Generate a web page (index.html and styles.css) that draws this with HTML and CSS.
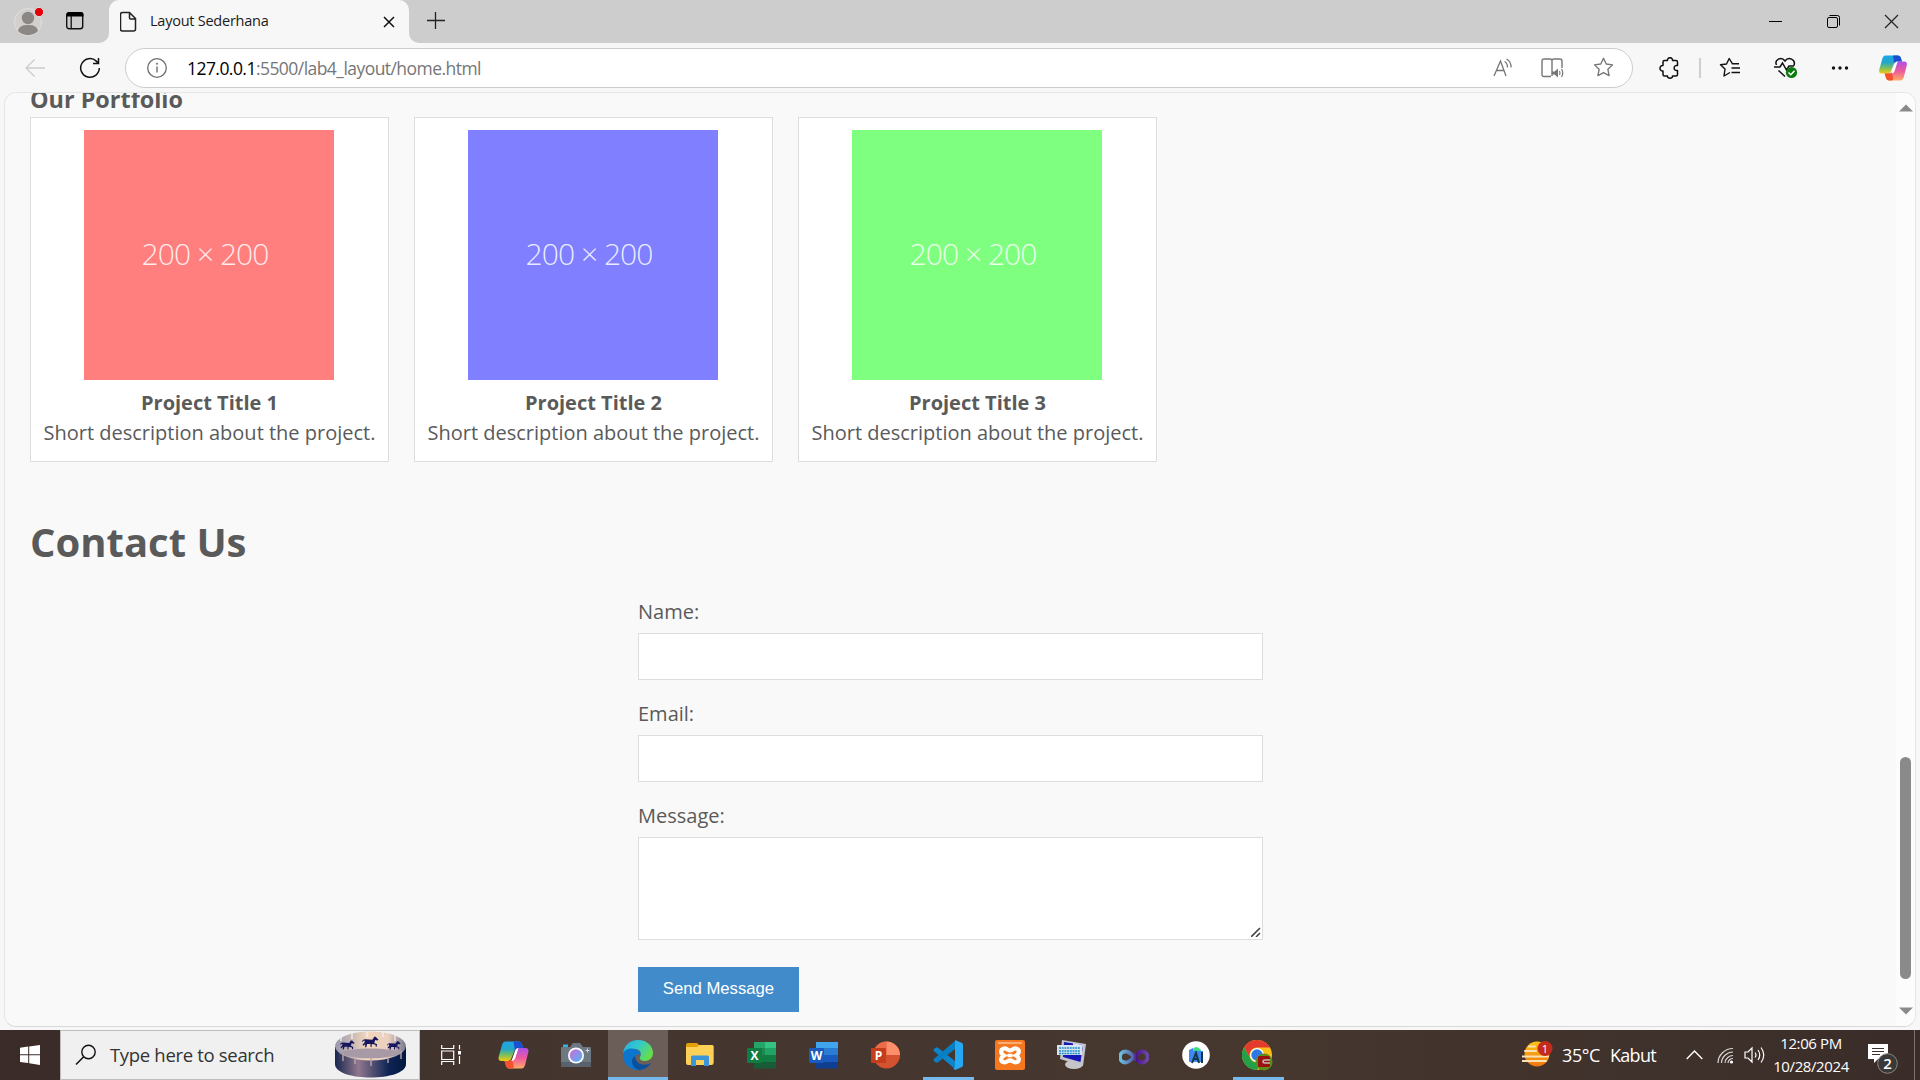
FILE: index.html
```html
<!DOCTYPE html>
<html lang="en">
<head>
<meta charset="utf-8">
<title>Layout Sederhana</title>
<link rel="stylesheet" href="styles.css">
</head>
<body>
<svg width="0" height="0" class="defs">
  <defs>
    <linearGradient id="cpA" x1="0" y1="0" x2="0" y2="1"><stop offset="0" stop-color="#1ba5ea"/><stop offset=".4" stop-color="#25a7c8"/><stop offset=".7" stop-color="#7fbf5a"/><stop offset="1" stop-color="#f6cc10"/></linearGradient>
    <linearGradient id="cpB" x1="0" y1="0" x2="0" y2="1"><stop offset="0" stop-color="#ad50e8"/><stop offset=".5" stop-color="#ee5a9c"/><stop offset="1" stop-color="#ffac68"/></linearGradient>
    <linearGradient id="edgeA" x1="0" y1="0" x2="1" y2=".5"><stop offset="0" stop-color="#2aa9e0"/><stop offset=".5" stop-color="#32c8cf"/><stop offset="1" stop-color="#65de4c"/></linearGradient>
    <linearGradient id="drum" x1="0" y1="0" x2="1" y2="0"><stop offset="0" stop-color="#17264f"/><stop offset=".33" stop-color="#90788e"/><stop offset=".75" stop-color="#102555"/><stop offset="1" stop-color="#01183f"/></linearGradient>
    <linearGradient id="rim" x1="0" y1="0" x2="1" y2="0"><stop offset="0" stop-color="#9a98ad"/><stop offset=".45" stop-color="#f2d6bd"/><stop offset=".75" stop-color="#ead0bf"/><stop offset="1" stop-color="#77798f"/></linearGradient>
    <linearGradient id="sun" x1="0" y1="0" x2="0" y2="1"><stop offset="0" stop-color="#ffc414"/><stop offset="1" stop-color="#f0750f"/></linearGradient>
    <linearGradient id="lens" x1="0" y1="0" x2="1" y2="1"><stop offset="0" stop-color="#d56bd8"/><stop offset="1" stop-color="#48b7f5"/></linearGradient>
    <linearGradient id="inf" x1="0" y1="0" x2="1" y2="0"><stop offset="0" stop-color="#6fc0e0"/><stop offset=".45" stop-color="#5668b0"/><stop offset=".6" stop-color="#4c1589"/><stop offset="1" stop-color="#6f46ab"/></linearGradient>
    <symbol id="copilot" viewBox="0 0 30 28">
      <path d="M7 .5h13c2 0 3 1 3.600 3l1 3.500H20c-3 0-4 2-5 5l-2 5c-.7 2-2 3-4 3H3c-3 0-3.500-2-2.600-5L3.500 4C4.300 1.500 5.500.5 7 .5z" fill="url(#cpA)"/>
      <path d="M15 .5h5c2 0 3 1 3.600 3l1 3.500H20c-1.500 0-3 .6-3.700 2z" fill="#1b4fd0"/>
      <path d="M23 27.500H11c-2 0-3-1-3.600-3L6 20h4c3 0 4-2 5-5l1.700-5c.6-2 2-3 4-3H27c3 0 3.500 2 2.600 5l-3 12c-.8 2.500-2 3.500-3.600 3.500z" fill="url(#cpB)"/>
      <path d="M11 27.500c-2 0-3-1-3.600-3L6 20h4c1.500 0 2.800-.6 3.600-2L15 24c.5 2 0 3.500-2 3.500z" fill="#f4512f"/>
      <path d="M13 20l3.500-10c.7-2 2-3 3.500-3L17 16.500c-.7 2.300-2 3.500-4 3.500z" fill="#fff"/>
    </symbol>
    <symbol id="star" viewBox="0 0 20 20"><path d="M10 1.200l2.600 5.500 6 .8-4.400 4.200 1.100 6L10 14.800l-5.300 2.900 1.100-6L1.400 7.500l6-.8z" fill="none" stroke="currentColor" stroke-width="1.300" stroke-linejoin="round"/></symbol>
    <symbol id="horse" viewBox="0 0 18 12"><path d="M0 6.500Q0 3 3.500 3L11 3.500 13 .5h1.500l3 3-1 1-2.500-.5-1 3 3 1.500-.5 2.500-1-.3-.2-1.700-3.800-1-.5 3.500-1-.3L9 8 5.500 8l-1 3.500H3.200L3.500 8.500 1.500 10 .5 9.200 3 6l-.5-1.500Q1 4.500 0 6.500z" fill="#16175c"/></symbol>
  </defs>
</svg>

<header class="tabstrip">
  <div class="lead">
    <svg width="32" height="32" viewBox="0 0 32 32"><circle cx="16" cy="17" r="13.500" fill="#d2d0ce" stroke="#e2e0de"/><circle cx="16" cy="13" r="6.200" fill="#8b8784"/><path d="M6 26c1-5 5-6 10-6s9 1 10 6c-5 5.500-15 5.500-20 0z" fill="#8b8784"/><circle cx="27" cy="7" r="4.600" fill="#e3000b" stroke="#dedede"/></svg>
    <svg width="20" height="20" viewBox="0 0 20 20"><rect x="1.700" y="1.700" width="16" height="16" rx="2.500" fill="none" stroke="#111" stroke-width="1.400"/><path d="M1.500 5.500V3.500q0-2.500 2.500-2.500h12q2.500 0 2.500 2.500v2z" fill="#000"/><path d="M6.200 5v13" stroke="#111" stroke-width="1.300"/></svg>
  </div>
  <div class="tab">
    <svg width="18" height="22" viewBox="0 0 18 22"><path d="M2.500 1.500h7l6 6V18q0 2-2 2h-11q-2 0-2-2V3.500q0-2 2-2zM9.500 1.500V7q0 1 1 1h5" fill="none" stroke="#222" stroke-width="1.500"/></svg>
    <span class="tab-title">Layout Sederhana</span>
    <svg width="12" height="12" viewBox="0 0 12 12"><path d="M1 1l10 10M11 1L1 11" stroke="#111" stroke-width="1.500"/></svg>
  </div>
  <svg class="plus" width="18" height="18" viewBox="0 0 18 18"><path d="M0 8.500h18M8.500 0v17" stroke="#222" stroke-width="1.300"/></svg>
  <div class="window-buttons">
    <svg width="15" height="15" viewBox="0 0 15 15"><path d="M1 7.500h13" stroke="#000"/></svg>
    <svg width="15" height="15" viewBox="0 0 15 15"><rect x="1.500" y="3.500" width="10" height="10" rx="1.500" fill="none" stroke="#000"/><path d="M3.500 1.500h8q2 0 2 2v8" fill="none" stroke="#000"/></svg>
    <svg width="15" height="15" viewBox="0 0 15 15"><path d="M1 1l13 13M14 1L1 14" stroke="#222" stroke-width="1.200"/></svg>
  </div>
</header>

<nav class="toolbar">
  <svg class="back" width="22" height="20" viewBox="0 0 22 20"><path d="M21 10H2M10.500 1.500L2 10l8.500 8.500" fill="none" stroke="#ccc" stroke-width="1.300"/></svg>
  <svg class="reload" width="22" height="22" viewBox="0 0 22 22"><path d="M20.300 11a9.300 9.300 0 1 1-3-6.900l2 2M19.500 1v5.500H14" fill="none" stroke="#111" stroke-width="1.500"/></svg>
  <div class="address">
    <svg width="22" height="22" viewBox="0 0 22 22"><circle cx="11" cy="11" r="9.300" fill="none" stroke="#6e6e6e" stroke-width="1.300"/><path d="M11 9.500v6" stroke="#6e6e6e" stroke-width="1.400"/><circle cx="11" cy="6.800" r="1" fill="#6e6e6e"/></svg>
    <span class="url"><b>127.0.0.1</b>:5500/lab4_layout/home.html</span>
    <div class="address-actions">
      <svg width="20" height="20" viewBox="0 0 20 20"><path d="M1 18L7.500 3 13 18M3.500 12.500h7.500M11.500 3.500q3 1.500 3 6M13.500 1q5 3 4.500 8.500" fill="none" stroke="#767676" stroke-width="1.300"/></svg>
      <svg width="24" height="20" viewBox="0 0 24 20"><path d="M10 18.500H3q-2 0-2-2V3q0-2 2-2h6q2 0 2 2v15M11 3q0-2 2-2h6q2 0 2 2v7" fill="none" stroke="#767676" stroke-width="1.400"/><path d="M11 13.500h2.500L17 10.500v9l-3.500-3H11z" fill="#767676"/><path d="M18.500 13q1 2 0 4M20.500 11q2.500 4 0 8" fill="none" stroke="#767676" stroke-width="1.200"/></svg>
      <svg width="21" height="21"><use href="#star"/></svg>
    </div>
  </div>
  <svg class="puzzle" width="21" height="22" viewBox="0 0 21 22"><path d="M5.500 3.500H8.500C8-.2 14 -.2 13.500 3.500h3.500q1.500 0 1.500 1.500V8.500C14 7.500 14 14.500 18.500 13.500v4q0 1.500-1.500 1.500h-3.500c.5 3-5.500 3-5 0H5.500Q4 19 4 17.500v-3.500C0 14.500 0 8 4 8.500V5q0-1.500 1.500-1.500z" fill="none" stroke="#111" stroke-width="1.500" stroke-linejoin="round"/></svg>
  <i class="divider"></i>
  <svg class="favs" width="22" height="21" viewBox="0 0 22 21"><path d="M20 6.800h-6.500L10.200 1.500 7.500 7l-6 .8L6 12l-1 7 6-3.500M12.500 11H21M12.500 15.500H21" fill="none" stroke="#111" stroke-width="1.400" stroke-linejoin="round"/></svg>
  <svg class="health" width="24" height="22" viewBox="0 0 24 22"><path d="M2.500 8C0 2.500 7.500-1 11 4c3.500-5 11-1.500 9 4.500M0 10h6l2.500-4 4 7 2.500-4h5M4.500 13.500l6.500 6" fill="none" stroke="#111" stroke-width="1.500"/><circle cx="17.500" cy="15.500" r="5.600" fill="#0d7a10"/><path d="M14.500 15.500l2.300 2.200 3.700-4" fill="none" stroke="#fff" stroke-width="1.500"/></svg>
  <svg class="dots" width="18" height="6" viewBox="0 0 18 6"><g fill="#111"><circle cx="2.500" cy="3" r="1.700"/><circle cx="9" cy="3" r="1.700"/><circle cx="15.500" cy="3" r="1.700"/></g></svg>
  <svg class="cp" width="28" height="26"><use href="#copilot"/></svg>
</nav>

<div class="viewport">
  <main class="page">
    <h3 class="portfolio-heading">Our Portfolio</h3>
    <section class="portfolio">
      <article class="card"><div class="thumb red">200 × 200</div><h4>Project Title 1</h4><p>Short description about the project.</p></article>
      <article class="card"><div class="thumb blue">200 × 200</div><h4>Project Title 2</h4><p>Short description about the project.</p></article>
      <article class="card"><div class="thumb green">200 × 200</div><h4>Project Title 3</h4><p>Short description about the project.</p></article>
    </section>
    <h1>Contact Us</h1>
    <form class="contact">
      <label for="name">Name:</label>
      <input id="name" type="text">
      <label for="email">Email:</label>
      <input id="email" type="email">
      <label for="message">Message:</label>
      <div class="message-box">
        <textarea id="message"></textarea>
        <svg class="grip" width="10" height="10" viewBox="0 0 10 10"><path d="M0 10L9 1M5 10l4-4" stroke="#444" stroke-width="1.600"/></svg>
      </div>
      <button type="button">Send Message</button>
    </form>
  </main>
  <div class="scrollbar">
    <svg width="14" height="8" viewBox="0 0 14 8"><path d="M0 7.500L7 .5l7 7z" fill="#8a8a8a"/></svg>
    <i class="scroll-thumb"></i>
    <svg width="14" height="8" viewBox="0 0 14 8"><path d="M0 .5h14l-7 7z" fill="#8a8a8a"/></svg>
  </div>
</div>

<footer class="taskbar">
  <div class="start"><svg width="20" height="20" viewBox="0 0 20 20"><path d="M0 2.800L8.200 1.600v7.700H0zM9.200 1.400L20 0v9.300H9.200zM0 10.300h8.200V18L0 17zM9.200 10.300H20V20L9.200 18.300z" fill="#fff"/></svg></div>
  <div class="search">
    <svg width="22" height="22" viewBox="0 0 22 22"><circle cx="13.500" cy="8" r="6.700" fill="none" stroke="#111" stroke-width="1.400"/><path d="M8.700 12.800L1 20.500" stroke="#111" stroke-width="1.500"/></svg>
    <span>Type here to search</span>
    <svg class="carousel" width="72" height="48" viewBox="0 0 72 48">
      <path d="M0 16v17c0 18 71 18 71 0V16z" fill="url(#drum)"/>
      <ellipse cx="35.500" cy="15" rx="35.500" ry="14.500" fill="url(#rim)"/>
      <path d="M4 22c10-6 53-6 63 0-12 7-51 7-63 0z" fill="#a799a6"/>
      <use href="#horse" x="5" y="8" width="15" height="12"/><use href="#horse" x="27" y="5" width="17" height="12"/><use href="#horse" x="52" y="9" width="14" height="11"/>
      <path d="M6 5v5M17 2v6M32 1v5M48 1v5M60 4v6" stroke="#f4f0ee" stroke-width="1.300"/>
      <path d="M8 22v8M20 25v8M36 27v8M53 25v7M66 20v8" stroke="#b9a6a9" stroke-width="1.400"/>
    </svg>
  </div>
  <div class="apps">
    <div class="app"><svg width="20" height="20" viewBox="0 0 20 20"><path d="M.7 0v3.500h12V0M.7 20v-3.500h12V20M.7 6h12v8.500H.7zM18.500 0v4.500M18.500 11v8" fill="none" stroke="#fff" stroke-width="1.200"/><path d="M17 6h3v3.500h-3z" fill="#fff"/></svg></div>
    <div class="app"><svg width="31" height="28"><use href="#copilot"/></svg></div>
    <div class="app"><svg width="30" height="26" viewBox="0 0 30 26"><path d="M2 2.500h5V6H2z" fill="#36b0e2"/><path d="M1 5h8l3-4h7l3 4h7q1 0 1 1v18q0 1-1 1H1q-1 0-1-1V6q0-1 1-1z" fill="#6e7883"/><path d="M0 20h30v4q0 1-1 1H1q-1 0-1-1z" fill="#59626c"/><circle cx="15" cy="13.500" r="8" fill="#fff"/><circle cx="15" cy="13.500" r="6.300" fill="url(#lens)"/><path d="M26.500 6.500v4M24.500 8.500h4" stroke="#c8d4de"/></svg></div>
    <div class="app active"><svg width="30" height="30" viewBox="0 0 30 30"><path d="M0 14C1 5 7 0 15 0c9 0 15 6 15 13 0 5-4 8-8 8-4 0-6-2-5-4 2-4 0-8-5-8-5 0-10 1-12 5z" fill="url(#edgeA)"/><path d="M0 15C0 10 5 8.500 9 8.500c5 0 9 3 8.500 7-2-2-6-1-6 3 0 6 8 9 16 5C24 28 20 30 15 30 6 30 0 23 0 15z" fill="#0c76cf"/><path d="M11.500 16c-5 4-2 13 5 14 5-.4 9-3 11.500-7-5 3-13 2-15-3z" fill="#0c4f9b"/></svg></div>
    <div class="app"><svg width="28" height="24" viewBox="0 0 28 24"><path d="M0 2q0-2 2-2h9l2 2h13q1.500 0 1.500 1.500V20H0z" fill="#e3a008"/><path d="M0 4h11l2-2h13q1.500 0 1.500 1.500V20q0 2-2 2H2q-2 0-2-2z" fill="#fdd158"/><path d="M5 23V14q0-1.500 1.500-1.500h15q1.500 0 1.500 1.500v9h-5v-6h-8v6z" fill="#3b95d8"/></svg></div>
    <div class="app office"><svg width="30" height="28" viewBox="0 0 30 28"><path d="M7 1h11v6H7z" fill="#22a567"/><path d="M18 1h11v6H18z" fill="#33c481"/><path d="M7 7h11v7H7z" fill="#1b8a50"/><path d="M18 7h11v7H18z" fill="#21a366"/><path d="M7 14h22v7H7z" fill="#107c41"/><path d="M7 21h22v6.500H7z" fill="#185c37"/><rect x="0" y="7" width="15" height="15" rx="1" fill="#107c41"/><text x="7.500" y="18.500">X</text></svg></div>
    <div class="app office"><svg width="30" height="28" viewBox="0 0 30 28"><path d="M7 1h22v6H7z" fill="#41a5ee"/><path d="M7 7h22v7H7z" fill="#2b7cd3"/><path d="M7 14h22v7H7z" fill="#185abd"/><path d="M7 21h22v6.500H7z" fill="#103f91"/><rect x="0" y="7" width="15" height="15" rx="1" fill="#185abd"/><text x="7.500" y="18.500">W</text></svg></div>
    <div class="app office"><svg width="30" height="28" viewBox="0 0 30 28"><circle cx="15.500" cy="14" r="13.500" fill="#d35230"/><path d="M15.500.5A13.500 13.500 0 0 0 2 14h13.500z" fill="#ed6c47"/><path d="M15.500.5A13.500 13.500 0 0 1 29 14H15.500z" fill="#ff8f6b"/><rect x="0" y="7" width="15" height="15" rx="1" fill="#c43e1c"/><text x="7.500" y="18.500">P</text></svg></div>
    <div class="app running"><svg width="30" height="30" viewBox="0 0 30 30"><path d="M1.500 8.500L3 7.500q1-.5 2 .3L22 21v8L.8 11q-1-1 .7-2.500z" fill="#0d85cb"/><path d="M1.500 21.500L3 22.500q1 .5 2-.3L22 9V1L.8 19q-1 1 .7 2.500z" fill="#087fc5"/><path d="M22 0l7 3q1 .5 1 2v20q0 1.500-1 2l-7 3-1.500-1.500 1.500-1.500V2z" fill="#27a9f2"/></svg></div>
    <div class="app"><svg width="30" height="30" viewBox="0 0 30 30"><rect width="30" height="30" rx="2" fill="#f5771f"/><path d="M3 3h24" stroke="#fcc190" stroke-width="1.500"/><path d="M9 8.500C11.500 8 13 10.500 15 10.500S18.500 8 21 8.500c4 .8 3.500 5 0 7 3.500 2 4 6 0 6.800-2.500.5-4-2-6-2s-3.500 2.500-6 2c-4-.8-3.500-4.800 0-6.800-3.500-2-4-6.200 0-7z" fill="#f5771f" stroke="#fff" stroke-width="4.200"/><path d="M12.500 15.500h5" stroke="#fff" stroke-width="3.500"/></svg></div>
    <div class="app"><svg width="30" height="30" viewBox="0 0 30 30"><ellipse cx="17" cy="24.500" rx="9" ry="4.500" fill="#c5c5c8"/><path d="M5 0l24 4-3 22L3 19z" fill="#c3c4ca"/><path d="M7 2l19 3-2.500 17L6 17z" fill="#1717b8"/><path d="M16 3l10 2-1 5-9-3z" fill="#dedff0"/><path d="M0 5h25v10H0z" fill="#d6e4ef"/><path d="M2 8h21M2 11h21M2 13.500h21" stroke="#208dc9" stroke-width="1.600" stroke-dasharray="2 .7"/></svg></div>
    <div class="app"><svg class="infinity" width="30" height="16" viewBox="0 0 30 16"><path d="M15 8C11 3 8.500 2.500 6.500 2.500a5.300 5.300 0 0 0 0 11c3.500 0 5.500-2.500 8.500-5.500s5-5.500 8-5.500a5.300 5.300 0 0 1 0 11c-3 0-5-2.500-8-5.500z" fill="none" stroke="url(#inf)" stroke-width="3.800"/></svg></div>
    <div class="app"><svg width="28" height="28" viewBox="0 0 28 28"><circle cx="14" cy="14" r="13.800" fill="#fff"/><path d="M10 9q4-6 9 0v2h-9z" fill="#3ddc84"/><path d="M7 9l4-2v3h10v10q0 1-1 1H8q-1 0-1-1z" fill="#4285f4"/><path d="M10 22l4-10 3 10M11 18h5M20 11v11" fill="none" stroke="#103b45" stroke-width="2"/></svg></div>
    <div class="app running"><svg width="31" height="31" viewBox="0 0 31 31"><circle cx="15" cy="15" r="15" fill="#fbc116"/><path d="M2 7.500A15 15 0 0 1 28 7.500H15A7.500 7.500 0 0 0 8.500 18.700z" fill="#e33b2e"/><path d="M2 7.500A15 15 0 0 0 15 30l6.500-11.300A7.500 7.500 0 0 1 8.500 18.700z" fill="#24a148"/><circle cx="15" cy="15" r="7" fill="#fff"/><circle cx="15" cy="15" r="5.700" fill="#2e77e5"/><circle cx="22" cy="22" r="8.500" fill="#5c8f19"/><rect x="16" y="16" width="12" height="11" rx="1.500" fill="#9c1111"/><path d="M28 20h-5q-2 0-2 1.500t2 1.500h5" fill="none" stroke="#c7bdb4" stroke-width="1.400"/></svg></div>
  </div>
  <div class="tray">
    <svg class="weather" width="31" height="28" viewBox="0 0 31 28"><circle cx="15" cy="14" r="12.500" fill="url(#sun)"/><path d="M7 6.500h6M3 11h11M0 16.500h16M17 16.500h9M0 21h24" stroke="#f9e2b4" stroke-width="2" stroke-linecap="round"/><circle cx="23" cy="8.500" r="7.500" fill="#c42b1c"/><text x="23" y="12.500">1</text></svg>
    <span class="temp">35°C</span><span class="cond">Kabut</span>
    <svg class="chev" width="17" height="10" viewBox="0 0 17 10"><path d="M.7 9l7.800-8 7.800 8" fill="none" stroke="#fff" stroke-width="1.400"/></svg>
    <svg class="wifi" width="17" height="17" viewBox="0 0 17 17"><g fill="none" stroke="#d8d5d3" stroke-width="1.200"><path d="M1 16C1 8 8 1.500 16 1.500"/><path d="M4.500 16C4.500 10 10 5 16 5"/><path d="M8 16c0-4 4-7.500 8-7.500"/><path d="M11 16c0-2.500 2.500-4.500 5-4.500"/></g><circle cx="14.500" cy="15" r="1.600" fill="#fff"/></svg>
    <svg class="vol" width="22" height="18" viewBox="0 0 22 18"><path d="M1 6h3l4-4v14l-4-4H1zM11 6.500q2 2.500 0 5M14 4q3.500 5 0 10M17 1.500q5.500 7.500 0 15" fill="none" stroke="#fff" stroke-width="1.200"/></svg>
    <div class="clock"><span>12:06 PM</span><span>10/28/2024</span></div>
    <svg class="notif" width="32" height="32" viewBox="0 0 32 32"><path d="M0 1h20v15H10l-4 4v-4H0z" fill="#fff"/><path d="M4 5.500h12M4 8.500h12M4 11.500h8" stroke="#3c302b"/><circle cx="19.500" cy="20.500" r="9.800" fill="#3b3937" stroke="#8b8683"/><text x="19.500" y="26">2</text></svg>
    <i class="peek"></i>
  </div>
</footer>
</body>
</html>
```
FILE: styles.css
```css
* { box-sizing: border-box; }
html, body { height: 100%; }
body {
  margin: 0;
  overflow: hidden;
  display: flex;
  flex-direction: column;
  background: #f7f7f7;
  font-family: "Open Sans", "Noto Sans", sans-serif;
}
svg { display: block; flex: none; }
.defs { position: absolute; }

/* Tab strip */
.tabstrip { height: 43px; flex: none; display: flex; background: linear-gradient(#f7f7f7, #f7f7f7) 99px 33px / 320px 10px no-repeat #cdcdcd; }
.lead { width: 109px; display: flex; align-items: center; gap: 21px; padding: 0 0 1px 12px; border-bottom-right-radius: 10px; background: #cdcdcd; }
.tab { width: 300px; display: flex; align-items: center; padding: 0 14px 0 11px; background: #f7f7f7; border-radius: 10px 10px 0 0; }
.tab-title { flex: 1; margin-left: 12px; padding-bottom: 2px; font-size: 14.500px; letter-spacing: -.24px; color: #1b1b1b; }
.plus { width: 60px; height: 43px; padding: 12px 24px 13px 18px; background: #cdcdcd; border-bottom-left-radius: 10px; }
.window-buttons { flex: 1; display: flex; justify-content: flex-end; align-items: center; gap: 43px; padding-right: 21px; }

/* Toolbar */
.toolbar { height: 49px; flex: none; display: flex; align-items: center; padding-left: 24px; }
.reload { margin-left: 33px; }
.address { width: 1508px; height: 40px; margin: 0 0 0 24px; display: flex; align-items: center; padding: 0 18px 0 20px; background: #fff; border: 1px solid #cdcdcd; border-radius: 20px; }
.url { margin-left: 19px; flex: 1; font-size: 17.500px; letter-spacing: -.55px; color: #767676; }
.url b { font-weight: 400; color: #000; }
.address-actions { display: flex; align-items: center; gap: 28px; color: #767676; }
.puzzle { margin-left: 26px; }
.divider { width: 2px; height: 20px; margin-left: 19px; background: #cfcfcf; }
.favs { margin-left: 18px; }
.health { margin-left: 33px; }
.dots { margin-left: 33px; }
.cp { margin-left: 30px; }

/* Page viewport */
.viewport { height: 935px; flex: none; margin: 0 4px; display: flex; overflow: hidden; background: #f9f9f9; border-radius: 12px; border: 1px solid #e6e6e6; border-bottom-color: #d9d9d9; }
.page { flex: 1; padding-left: 25px; font-size: 20px; color: #5a5a5a; }
.scrollbar { width: 19px; display: flex; flex-direction: column; align-items: center; padding: 11px 0 11px 0; background: #fcfcfc; }
.scroll-thumb { width: 11px; height: 223px; margin: 645px 0 28px; border-radius: 6px; background: #8a8a8a; }

h1, h3, h4, p { margin: 0; }
.portfolio-heading { height: 31px; margin-top: -7px; font-size: 23.400px; line-height: 26px; }
.portfolio { display: flex; gap: 25px; }
.card { width: 359px; height: 345px; padding: 12px 0 0; border: 1px solid #ddd; background: #fff; text-align: center; }
.thumb { width: 250px; height: 250px; margin: 0 0 8px 53px; display: flex; align-items: center; justify-content: center; padding: 0 8px 3px 0; color: rgba(255, 255, 255, .85); font-weight: 300; font-size: 30px; letter-spacing: -.95px; }
.red { background: #ff7f7f; }
.blue { background: #7f7fff; }
.green { background: #7fff7f; }
.card h4 { font-size: 20px; line-height: 30px; }
.card p { line-height: 30px; white-space: nowrap; }
h1 { margin-top: 50px; font-size: 40px; line-height: 60px; }
.contact { width: 625px; margin: 25px 0 0 608px; display: flex; flex-direction: column; }
.contact label { height: 36px; line-height: 30px; }
.contact input { height: 47px; margin: 0 0 19px; border: 1px solid #ddd; background: #fff; }
.message-box { position: relative; height: 103px; margin-bottom: 27px; }
.contact textarea { display: block; width: 100%; height: 103px; margin: 0; resize: none; border: 1px solid #ddd; background: #fff; }
.grip { position: absolute; right: 2px; bottom: 3px; }
.contact button { width: 161px; height: 45px; border: 0; padding: 0 0 2px; background: #428bca; color: #fff; font: 16.700px "Liberation Sans", Arial, sans-serif; }

/* Taskbar */
.taskbar { height: 50px; flex: none; margin-top: auto; display: flex; background: linear-gradient(90deg, #3a2b28, #44362f 30%, #46382f 65%, #3a2c28); color: #fff; }
.start { width: 60px; display: grid; place-items: center; }
.search { width: 360px; display: flex; align-items: center; padding: 0 12px 0 14px; background: #f0f0f0; border: 1px solid #bdbdbd; }
.search span { flex: 1; margin: 0 0 2px 13px; font-size: 18.500px; color: #333; letter-spacing: -.32px; }
.apps { display: flex; }
.app { width: 62px; display: grid; place-items: center; padding-left: 1px; }
.app:first-child { padding-right: 2px; }
.app.active { background: linear-gradient(#76b9ed, #76b9ed) 2px 47px / 61px 3px no-repeat, linear-gradient(#6b5e58, #6b5e58) 2px 0 / 61px 50px no-repeat; }
.app.running { background: linear-gradient(#76b9ed, #76b9ed) 7px 47px / 51px 3px no-repeat; }
.office text { fill: #fff; font-size: 12px; font-weight: 700; text-anchor: middle; }
.infinity { margin-top: 3px; }
.tray { flex: 1; display: flex; align-items: center; }
.weather { margin: -2px 0 0 234px; }
.weather text { fill: #fff; font-size: 11px; text-anchor: middle; }
.temp, .cond { font-size: 18px; letter-spacing: -.4px; white-space: nowrap; }
.temp { width: 48px; margin-left: 9px; }
.cond { width: 47px; letter-spacing: -.7px; }
.chev { margin-left: 29px; }
.wifi { margin-left: 14px; }
.vol { margin-left: 10px; }
.clock { width: 76px; margin-left: 7px; display: flex; flex-direction: column; align-items: center; font-size: 15px; line-height: 23px; letter-spacing: -.4px; white-space: nowrap; }
.notif { margin: 8px 0 0 19px; }
.notif text { fill: #fff; font-size: 15px; font-weight: 600; text-anchor: middle; }
.peek { width: 1px; height: 50px; margin-left: auto; margin-right: 5px; background: #7c726e; }
```
